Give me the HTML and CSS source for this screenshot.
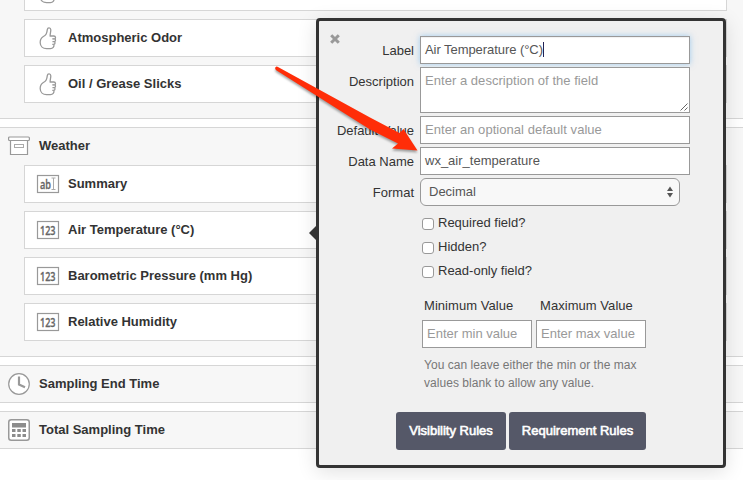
FILE: index.html
```html
<!DOCTYPE html>
<html lang="en">
<head>
<meta charset="utf-8">
<title>Form Builder</title>
<link rel="stylesheet" href="styles.css">
</head>
<body>
<svg class="defs" aria-hidden="true">
  <symbol id="thumb" viewBox="0 0 18 24">
    <path d="M8.300 3.600C8.600 1.200 11.600 1.200 11.800 3.800C11.900 5.800 10.900 7.800 11.200 10H14.800C16.900 10.100 17 12.500 15.600 12.900C16.900 13.300 16.800 15.300 15.400 15.700C16.400 16.100 16.100 18.100 14.900 18.400C15.400 20.800 13.800 22.700 11.500 22.700H7.500C4 22.700 1.300 20.300 1.200 16.700C1.100 14 2.200 11.800 4 10.700C5.500 9.900 6.600 9.300 7.200 8C7.900 6.600 8.100 5.200 8.300 3.600Z"/>
    <path d="M13.300 12.900H15.400M13.500 15.700H15.200M13.300 18.400H14.700"/>
  </symbol>
</svg>
<main class="fields">
  <section class="section section-cut">
    <div class="card"><svg class="icon-thumb"><use href="#thumb"/></svg></div>
    <div class="card"><svg class="icon-thumb"><use href="#thumb"/></svg><span>Atmospheric Odor</span></div>
    <div class="card"><svg class="icon-thumb"><use href="#thumb"/></svg><span>Oil / Grease Slicks</span></div>
  </section>
  <section class="section group">
    <header class="head">
      <svg class="icon" viewBox="0 0 22 22"><path class="line" d="M2.500 4.500V18.500H19.500V4.500"/><rect class="line" x=".6" y="1" width="20.800" height="3.500" rx="1"/><rect class="thin" x="6.500" y="8.500" width="9" height="3"/></svg>
      <span>Weather</span>
    </header>
    <div class="card"><svg class="icon-box" viewBox="0 0 22 18"><rect class="line" x=".5" y=".5" width="21" height="17"/><text x="3" y="13.500" textLength="11" lengthAdjust="spacingAndGlyphs">ab</text><path class="thin" d="M14.500 3H18.500M14.500 14.500H18.500M16.500 3V14.500"/></svg><span>Summary</span></div>
    <div class="card"><svg class="icon-box" viewBox="0 0 22 18"><rect class="line" x=".5" y=".5" width="21" height="17"/><text x="3" y="13.500" textLength="15.500" lengthAdjust="spacingAndGlyphs">123</text></svg><span>Air Temperature (°C)</span></div>
    <div class="card"><svg class="icon-box" viewBox="0 0 22 18"><rect class="line" x=".5" y=".5" width="21" height="17"/><text x="3" y="13.500" textLength="15.500" lengthAdjust="spacingAndGlyphs">123</text></svg><span>Barometric Pressure (mm Hg)</span></div>
    <div class="card"><svg class="icon-box" viewBox="0 0 22 18"><rect class="line" x=".5" y=".5" width="21" height="17"/><text x="3" y="13.500" textLength="15.500" lengthAdjust="spacingAndGlyphs">123</text></svg><span>Relative Humidity</span></div>
  </section>
  <section class="section single">
    <header class="head">
      <svg class="icon" viewBox="0 0 22 22"><circle class="line" cx="11" cy="11" r="10.300"/><path class="hand" d="M11 3.500V11.500L17 14.300"/></svg>
      <span>Sampling End Time</span>
    </header>
  </section>
  <section class="section single">
    <header class="head">
      <svg class="icon" viewBox="0 0 22 22"><rect class="calc" x=".75" y=".75" width="20.500" height="20.500" rx="2.500"/><path class="keys" d="M4 4h14v4.500H4zM4 10h3.500v3H4zM9.300 10h3.500v3h-3.500zM14.500 10H18v3h-3.500zM4 15h3.500v3H4zM9.300 15h3.500v3h-3.500zM14.500 15H18v3h-3.500z"/></svg>
      <span>Total Sampling Time</span>
    </header>
  </section>
</main>

<form class="popover">
  <svg class="close" viewBox="0 0 10 10"><path d="M1.200 1.200L8.800 8.800M8.800 1.200L1.200 8.800"/></svg>
  <div class="row"><label>Label</label><div class="input focus">Air Temperature (°C)<i class="caret"></i></div></div>
  <div class="row"><label>Description</label><div class="input area hint">Enter a description of the field<svg class="grip" viewBox="0 0 8 8"><path d="M.5 7.500L7.500 .5M4.500 7.500L7.500 4.500"/></svg></div></div>
  <div class="row"><label>Default Value</label><div class="input hint">Enter an optional default value</div></div>
  <div class="row"><label>Data Name</label><div class="input">wx_air_temperature</div></div>
  <div class="row"><label>Format</label><div class="select">Decimal<svg viewBox="0 0 6 12"><path d="M0 5L3 .5L6 5zM0 7H6L3 11.500z"/></svg></div></div>
  <div class="checks">
    <div class="check"><i></i><span>Required field?</span></div>
    <div class="check"><i></i><span>Hidden?</span></div>
    <div class="check"><i></i><span>Read-only field?</span></div>
  </div>
  <div class="range">
    <div><label>Minimum Value</label><div class="input hint">Enter min value</div></div>
    <div><label>Maximum Value</label><div class="input hint">Enter max value</div></div>
  </div>
  <p class="help">You can leave either the min or the max<br>values blank to allow any value.</p>
  <div class="actions"><div class="btn vis">Visibility Rules</div><div class="btn req">Requirement Rules</div></div>
</form>
<svg class="pointer" viewBox="0 0 160 100"><path d="M5.500 7.200Q4.500 8.800 6.200 10.200L100 69.500L128 83.500L122 88.500L147.500 90.500L133.500 69L129.500 73L100 57.500L7.500 6.800Q6.300 6.300 5.500 7.200Z"/></svg>
</body>
</html>
```
FILE: styles.css
```css
* { box-sizing: border-box; }
body {
  margin: 0;
  width: 743px;
  height: 480px;
  overflow: hidden;
  position: relative;
  background: #fff;
  color: #333;
  font: 13px/18px "Liberation Sans", Arial, sans-serif;
}
.defs { position: absolute; width: 0; height: 0; }
.fields { display: flex; flex-direction: column; gap: 8px; }
.section {
  background: #f7f7f7;
  border-top: 1px solid #d6d6d6;
  border-bottom: 1px solid #d6d6d6;
  padding: 0 16px 15px 24px;
  display: flex;
  flex-direction: column;
  gap: 8px;
  font-weight: bold;
}
.section-cut { margin-top: -27px; border-top: 0; }
.card {
  height: 38px;
  background: #fff;
  border: 1px solid #d6d6d6;
  display: flex;
  align-items: center;
  padding-left: 12px;
}
.card span { padding-bottom: 1px; }
.icon-thumb {
  width: 18px;
  height: 24px;
  margin: 0 11px 0 2px;
  fill: none;
  stroke: #999;
  stroke-width: 1.3;
}
.icon-box { width: 22px; height: 18px; margin-right: 9px; overflow: visible; }
.icon-box text {
  font: 600 12.5px "Open Sans", sans-serif;
  fill: #666;
  stroke: #666;
  stroke-width: .3;
}
.head { height: 29px; margin-left: -16px; padding-top: 8px; display: flex; align-items: center; }
.head .icon { width: 22px; height: 22px; margin-right: 9px; }
.group .head span { padding-bottom: 2px; }
.single { padding-bottom: 0; }
.single .head { height: 36px; padding-top: 0; }
.line { fill: #fff; stroke: #999; stroke-width: 1.2; }
.thin { fill: none; stroke: #aaa; stroke-width: 1; }
.hand { fill: none; stroke: #999; stroke-width: 2.2; }
.calc { fill: #fff; stroke: #999; stroke-width: 1.5; }
.keys { fill: #8c8c8c; }

.popover {
  position: absolute;
  left: 316px;
  top: 18px;
  width: 410px;
  height: 450px;
  padding-top: 15px;
  background: #f0f0f0;
  border: 3px solid #333;
  border-radius: 4px;
  box-shadow: 0 4px 20px rgba(0, 0, 0, .12);
}
.popover::before {
  content: "";
  position: absolute;
  left: -10px;
  top: 205px;
  border: 7px solid transparent;
  border-left: 0;
  border-right-color: #333;
}
.close { position: absolute; left: 11px; top: 13px; width: 10px; height: 10px; }
.close path { stroke: #999; stroke-width: 3; }
.row { display: flex; margin-bottom: 3px; }
.row label { width: 95px; margin-right: 6px; padding-top: 6px; text-align: right; }
.input {
  position: relative;
  width: 270px;
  height: 28px;
  padding: 4px;
  background: #fff;
  border: 1px solid #999;
  color: #555;
  white-space: nowrap;
}
.focus { box-shadow: 0 0 6px rgba(82, 168, 236, .5), inset 0 1px 1px rgba(0, 0, 0, .06); letter-spacing: -.06px; }
.caret { display: inline-block; width: 1px; height: 15px; background: #225; vertical-align: -3px; }
.hint { color: #999; letter-spacing: .04px; }
.area { height: 46px; }
.grip { position: absolute; right: 1px; bottom: 1px; width: 8px; height: 8px; }
.grip path { stroke: #555; stroke-width: .9; }
.select {
  width: 260px;
  height: 28px;
  padding: 4px 6px 4px 8px;
  border: 1px solid #999;
  border-radius: 6px;
  background: #f8f8f8;
  color: #555;
  display: flex;
  justify-content: space-between;
  align-items: center;
}
.select svg { width: 6px; height: 12px; fill: #555; }
.checks { margin: 6px 0 0 103px; }
.check { display: flex; height: 24px; padding-top: 2px; }
.check i { width: 12px; height: 12px; margin: 4px 4px 0 0; background: #fff; border: 1px solid #999; border-radius: 3px; }
.range { display: flex; gap: 4px; margin: 13px 0 0 103px; }
.range label { display: block; height: 23px; padding-left: 2px; letter-spacing: .05px; }
.range > div + div label { padding-left: 4px; }
.range .input { width: 110px; letter-spacing: 0; }
.help { margin: 8px 0 0 105px; font-size: 12px; line-height: 18px; letter-spacing: .04px; color: #777; }
.actions { display: flex; gap: 3px; margin: 20px 0 0 77px; }
.btn {
  height: 38px;
  line-height: 37px;
  text-align: center;
  color: #fff;
  background: #555868;
  border-radius: 3px;
  -webkit-text-stroke: .6px #fff;
}
.vis { width: 110px; }
.req { width: 137px; }
.pointer { position: absolute; left: 270px; top: 60px; width: 160px; height: 100px; filter: drop-shadow(0 2px 1px rgba(0, 0, 0, .35)); }
.pointer path { fill: #ff2d08; }
```
